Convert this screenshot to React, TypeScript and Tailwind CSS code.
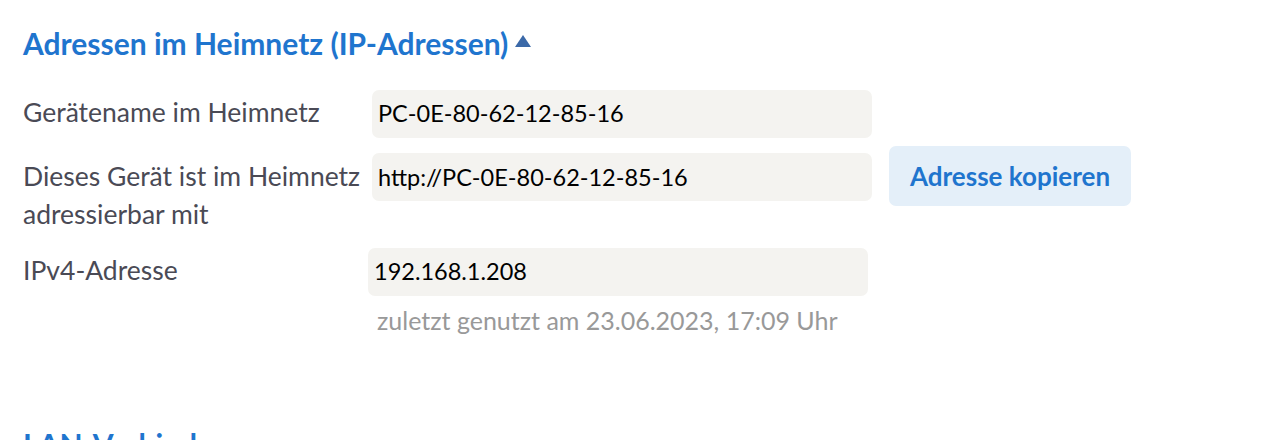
import React from 'react';

const font = { fontFamily: 'Lato, "Noto Sans", sans-serif' };

function Field({ value, className = '' }: { value: string; className?: string }) {
  return (
    <div className={`flex h-[48px] w-[500px] items-center rounded-[7px] bg-[#f4f3f0] px-[6px] text-[23.5px] text-black ${className}`}>
      {value}
    </div>
  );
}

export default function App() {
  return (
    <div className="h-[440px] w-[1270px] overflow-hidden bg-white px-[23px] pt-[24px]" style={font}>
      <h2 className="flex items-center gap-[7px] text-[30px] font-bold leading-[38px] text-[#1f75ce]">
        Adressen im Heimnetz (IP-Adressen)
        <svg width="16" height="12" viewBox="0 0 16 12" className="mt-[-4px]">
          <path d="M8 0 L16 12 L0 12 Z" fill="#3b69a8" />
        </svg>
      </h2>

      <div className="mt-[28px] flex items-baseline">
        <div className="w-[349px] shrink-0 text-[26.5px] leading-[38px] text-[#4a4a55]">Gerätename im Heimnetz</div>
        <Field value="PC-0E-80-62-12-85-16" />
      </div>

      <div className="mt-[8px] flex items-baseline">
        <div className="w-[349px] shrink-0 text-[26.5px] leading-[38px] text-[#4a4a55]">
          Dieses Gerät ist im Heimnetz
          <br />
          adressierbar mit
        </div>
        <Field value="http://PC-0E-80-62-12-85-16" />
        <button className="ml-[17px] flex h-[60px] items-center rounded-[7px] bg-[#e4eff9] px-[21px] text-[26px] font-bold text-[#1f75ce]">
          Adresse kopieren
        </button>
      </div>

      <div className="mt-[15px] flex items-baseline">
        <div className="w-[345px] shrink-0 text-[26.5px] leading-[38px] text-[#4a4a55]">IPv4-Adresse</div>
        <div>
          <Field value="192.168.1.208" />
          <div className="mt-[5px] pl-[9px] text-[25px] leading-[38px] text-[#999999]">
            zuletzt genutzt am 23.06.2023, 17:09 Uhr
          </div>
        </div>
      </div>

      <h2 className="mt-[86px] text-[30px] font-bold leading-[38px] text-[#1f75ce]">LAN-Verbindung</h2>
    </div>
  );
}
